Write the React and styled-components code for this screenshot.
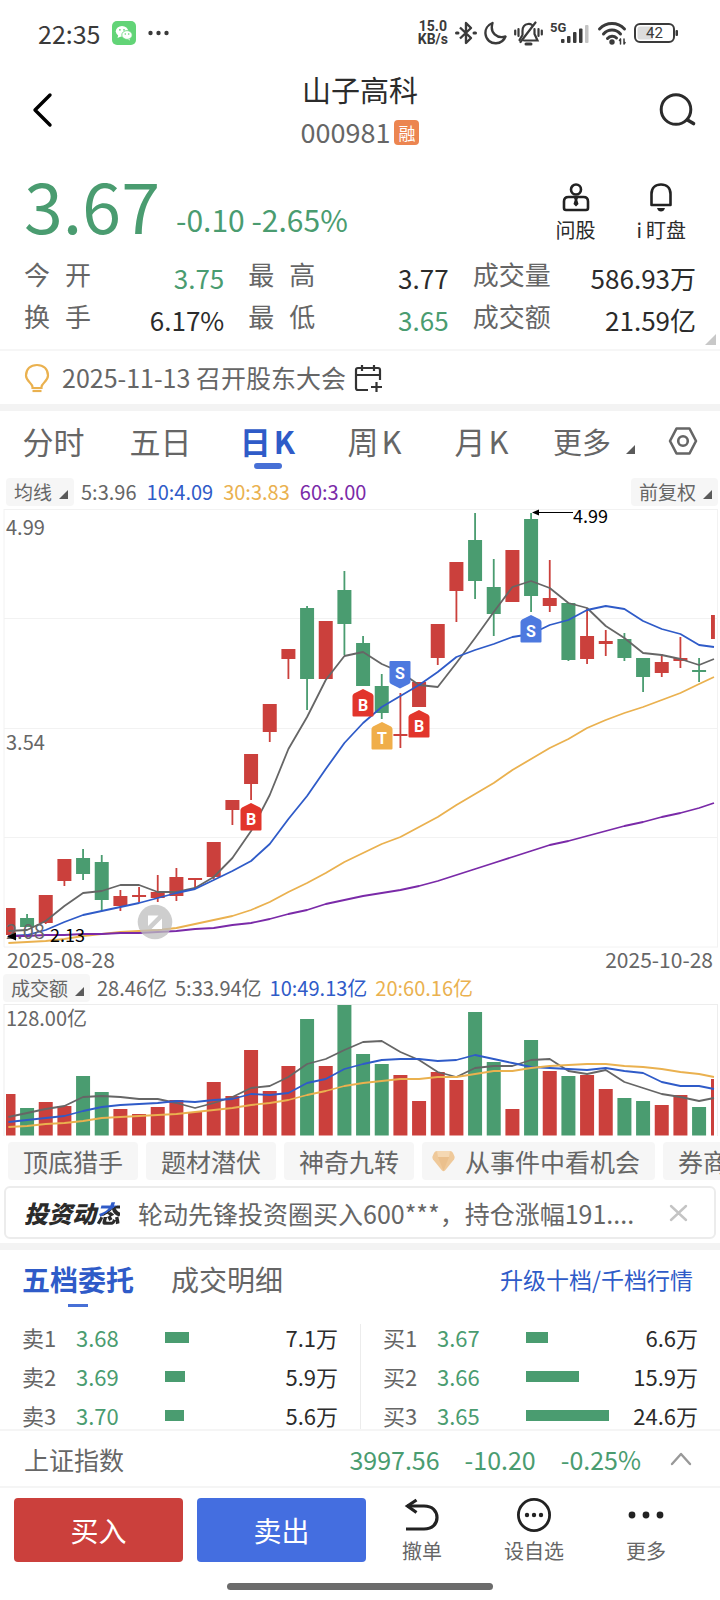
import React from "react";
import styled, { createGlobalStyle, css } from "styled-components";

const GREEN = "#4a9c70";
const RED = "#cb403c";
const BLUE = "#2f5bc8";
const GOLD = "#eab14f";
const PURPLE = "#7a2aa8";
const GRAY = "#666666";
const INK = "#2b2b2b";

const GlobalStyle = createGlobalStyle`
  * { box-sizing: border-box; }
  body {
    margin: 0;
    background: #fff;
    color: ${INK};
    font-family: "Noto Sans CJK SC", "Noto Sans", sans-serif;
  }
  button {
    border: 0;
    padding: 0;
    background: none;
    color: inherit;
    font: inherit;
  }
  h1, dl, dd, dt, p, ul { margin: 0; padding: 0; font-weight: 400; }
  svg { display: block; flex: none; }
`;

const Page = styled.div`
  width: 100%;
  overflow: hidden;
`;

/* ---------- status bar ---------- */
const StatusBar = styled.header`
  display: flex;
  align-items: center;
  justify-content: space-between;
  height: 66px;
  padding: 0 41px 0 38px;
  color: #3a3a3a;
`;
const StatusGroup = styled.div`
  display: flex;
  align-items: center;
  gap: ${(p) => p.$gap}px;
`;
const Clock = styled.time`
  font-size: 25px;
  line-height: 32px;
`;
const NetSpeed = styled.div`
  font: 700 14px/13px Roboto, sans-serif;
  text-align: center;
`;

/* ---------- title bar ---------- */
const TitleBar = styled.nav`
  display: grid;
  grid-template-columns: 1fr auto 1fr;
  align-items: center;
  height: 88px;
  padding: 0 23px;
`;
const NavButton = styled.button`
  justify-self: ${(p) => p.$side};
`;
const TitleBlock = styled.div`
  text-align: center;
`;
const StockName = styled.h1`
  font-size: 29px;
  line-height: 44px;
`;
const CodeLine = styled.div`
  display: flex;
  align-items: center;
  justify-content: center;
  gap: 4px;
  color: ${GRAY};
  font-size: 27px;
  line-height: 42px;
`;
const MarginTag = styled.span`
  width: 25px;
  border-radius: 4px;
  background: #ec8550;
  color: #fff;
  font-size: 17px;
  line-height: 25px;
  text-align: center;
`;

/* ---------- quote ---------- */
const QuoteHead = styled.section`
  display: flex;
  align-items: flex-end;
  justify-content: space-between;
  height: 94px;
  padding: 0 34px 0 24px;
`;
const PriceGroup = styled.div`
  display: flex;
  align-items: flex-end;
  gap: 16px;
  color: ${GREEN};
`;
const Price = styled.strong`
  font-size: 70px;
  font-weight: 400;
  line-height: 88px;
`;
const Change = styled.span`
  font-size: 30px;
  line-height: 58px;
`;
const QuickActions = styled.div`
  display: flex;
  gap: 41px;
`;
const QuickAction = styled.button`
  display: flex;
  flex-direction: column;
  align-items: center;
  gap: 4px;
  padding-bottom: 4px;
  font-size: 20px;
  line-height: 28px;
`;
const QuickLabel = styled.span`
  display: flex;
  gap: 4px;
`;
const Stats = styled.dl`
  display: grid;
  grid-template-columns: 200fr 200fr 223fr;
  column-gap: 24px;
  padding: 9px 24px 8px;
`;
const Stat = styled.div`
  display: flex;
  justify-content: space-between;
  height: 42px;
  font-size: 26px;
`;
const StatLabel = styled.dt`
  display: flex;
  gap: ${(p) => (p.$spread ? 15 : 0)}px;
  color: ${GRAY};
  line-height: 34px;
`;
const StatValue = styled.dd`
  color: ${(p) => (p.$down ? GREEN : INK)};
  line-height: 42px;
`;
const StatsWrap = styled.section`
  position: relative;
  border-bottom: 2px solid #f6f6f6;
`;
const Corner = styled.svg`
  position: absolute;
  right: 4px;
  bottom: 4px;
`;
const Notice = styled.a`
  display: flex;
  align-items: center;
  height: 53px;
  padding: 0 24px;
  color: ${GRAY};
  font-size: 25px;
  line-height: 34px;
  text-decoration: none;
`;
const NoticeText = styled.span`
  margin: 0 8px 2px 12px;
`;
const Band = styled.div`
  height: 7px;
  background: #f3f3f3;
`;

/* ---------- period tabs ---------- */
const Periods = styled.div`
  display: flex;
  height: 63px;
  padding-right: 22px;
`;
const PeriodTabs = styled.div`
  display: grid;
  flex: 535;
  grid-template-columns: repeat(5, 1fr);
`;
const PeriodTools = styled.div`
  display: flex;
  flex: 145;
  align-items: center;
  justify-content: space-between;
  padding: 0 0 4px 18px;
`;
const Period = styled.button`
  position: relative;
  display: flex;
  justify-content: center;
  gap: 3px;
  color: ${(p) => (p.$active ? BLUE : GRAY)};
  font-size: 31px;
  font-weight: ${(p) => (p.$active ? 700 : 400)};
  line-height: 60px;
  ${(p) =>
    p.$active &&
    css`
      &::after {
        content: "";
        position: absolute;
        bottom: 5px;
        left: 50%;
        width: 28px;
        height: 6px;
        margin-left: -14px;
        border-radius: 3px;
        background: #4770d6;
      }
    `}
`;
const MoreButton = styled.button`
  display: flex;
  align-items: flex-end;
  gap: 15px;
  color: ${GRAY};
  font-size: 29px;
  line-height: 58px;
`;
const PeriodCaret = styled.span`
  padding-bottom: 16px;
`;

/* ---------- indicator rows ---------- */
const IndicatorRow = styled.div`
  display: flex;
  align-items: center;
  height: ${(p) => p.$height}px;
  padding: 0 2px 0 ${(p) => p.$left}px;
  font-size: 20px;
  line-height: 28px;
`;
const Select = styled.button`
  display: flex;
  align-items: center;
  gap: 7px;
  height: 28px;
  padding: 0 6px 0 8px;
  border-radius: 4px;
  background: #f6f6f6;
  color: ${GRAY};
  font-size: 19px;
  line-height: 28px;
`;
const SelectCaret = styled.span`
  padding-top: 6px;
`;
const Averages = styled.div`
  display: flex;
  flex: 1;
  gap: ${(p) => p.$gap}px;
  padding-left: 7px;
`;
const Average = styled.span`
  color: ${(p) => p.$color};
`;
const ChartSvg = styled.svg`
  width: 100%;
  height: auto;
  overflow: visible;
`;
const Dates = styled.div`
  display: flex;
  justify-content: space-between;
  height: 23px;
  padding: 0 7px;
  color: ${GRAY};
  font-size: 21px;
  line-height: 20px;
`;

/* ---------- strategy chips ---------- */
const Chips = styled.div`
  display: flex;
  gap: 8px;
  padding: 6px 0 6px 8px;
  overflow: hidden;
`;
const Chip = styled.button`
  display: flex;
  flex: none;
  align-items: center;
  gap: 10px;
  height: 38px;
  padding: 0 15px 0 ${(p) => (p.$icon ? 10 : 15)}px;
  border-radius: 4px;
  background: #f6f6f6;
  color: ${GRAY};
  font-size: 25px;
  line-height: 38px;
`;

/* ---------- news ---------- */
const News = styled.div`
  display: flex;
  align-items: center;
  height: 53px;
  margin: 0 4px 4px;
  padding: 0 26px 0 18px;
  border: 2px solid #ececec;
  border-radius: 6px;
`;
const NewsBrand = styled.strong`
  flex: none;
  font-size: 24px;
  font-style: italic;
  font-weight: 900;
`;
const BrandAccent = styled.span`
  background: linear-gradient(145deg, ${BLUE} 48%, ${INK} 49%);
  background-clip: text;
  -webkit-background-clip: text;
  color: transparent;
`;
const NewsText = styled.p`
  flex: 1;
  min-width: 0;
  padding: 0 18px;
  overflow: hidden;
  color: ${GRAY};
  font-size: 25px;
  line-height: 40px;
  white-space: nowrap;
`;

/* ---------- order book ---------- */
const BookHead = styled.div`
  display: flex;
  align-items: center;
  gap: 37px;
  height: 74px;
  padding: 0 27px 16px 22px;
`;
const BookTab = styled.button`
  position: relative;
  color: ${(p) => (p.$active ? BLUE : GRAY)};
  font-size: 28px;
  font-weight: ${(p) => (p.$active ? 700 : 400)};
  line-height: 56px;
  ${(p) =>
    p.$active &&
    css`
      &::after {
        content: "";
        position: absolute;
        bottom: 0;
        left: 50%;
        width: 20px;
        height: 3px;
        margin-left: -10px;
        background: #4770d6;
      }
    `}
`;
const Upgrade = styled.a`
  margin-left: auto;
  color: ${BLUE};
  font-size: 23px;
  text-decoration: none;
`;
const Book = styled.div`
  display: grid;
  grid-template-columns: 1fr 1fr;
`;
const Side = styled.table`
  width: 100%;
  border-collapse: collapse;
  table-layout: fixed;
  font-size: 22px;
  line-height: 27px;
`;
const SideWrap = styled.div`
  padding: 0 22px;
  border-left: ${(p) => (p.$divided ? "1px solid #ececec" : "0")};
`;
const Cell = styled.td`
  width: ${(p) => p.$width};
  padding: 0 0 12px;
  color: ${(p) => p.$color};
  text-align: ${(p) => p.$align || "left"};
  white-space: nowrap;
  vertical-align: top;
  tr:last-child > & {
    padding-bottom: 0;
  }
`;
const DepthTrack = styled.div`
  display: flex;
  align-items: center;
  height: 27px;
`;
const DepthBar = styled.div`
  height: 11px;
  background: ${GREEN};
`;

/* ---------- index row and trade bar ---------- */
const IndexRow = styled.div`
  display: flex;
  align-items: center;
  height: 59px;
  padding: 0 28px 0 24px;
  border-top: 2px solid #f5f5f5;
  border-bottom: 2px solid #f5f5f5;
  background: #fff;
  color: ${GRAY};
  font-size: 25px;
`;
const IndexFigures = styled.div`
  display: flex;
  gap: 25px;
  margin-left: auto;
  padding-right: 29px;
  color: ${GREEN};
`;
const TradeBar = styled.footer`
  display: flex;
  gap: 14px;
  padding: 10px 18px 0 14px;
`;
const TradeButton = styled.button`
  flex: 169;
  height: 64px;
  border-radius: 4px;
  background: ${(p) => p.$color};
  color: #fff;
  font-size: 28px;
  line-height: 60px;
`;
const Tools = styled.div`
  display: grid;
  flex: 336;
  grid-template-columns: repeat(3, 1fr);
  margin-left: -14px;
`;
const Tool = styled.button`
  display: flex;
  flex-direction: column;
  align-items: center;
  gap: 5px;
  color: ${GRAY};
  font-size: 20px;
  line-height: 28px;
`;
const HomeArea = styled.div`
  display: flex;
  justify-content: center;
  padding: 18px 0 10px;
`;
const HomeIndicator = styled.div`
  width: 37%;
  height: 7px;
  border-radius: 4px;
  background: #6b6b6b;
`;

const Caret = ({ size = 9, color = "#5a5a5a" }) => (
  <svg width={size} height={size} viewBox="0 0 10 10" aria-hidden="true">
    <path d="M10 0V10H0Z" fill={color} />
  </svg>
);

/* ---------- chart data ---------- */
const barX = (i) => (i === 38 ? 714 : 8.4 + i * 18.667);

// [direction, high, body top, body bottom, low, volume top]
const CANDLES = [
  ["r", 399, 399, 426, 426, 90],
  ["g", 405, 409, 418, 418, 104],
  ["r", 386, 386, 414, 415, 98],
  ["r", 350, 350, 372, 377, 102],
  ["g", 340, 349, 365, 371, 72],
  ["g", 346, 353, 391, 402, 88],
  ["r", 381, 387, 397, 402, 105],
  ["r", 378, 386, 388, 393, 110],
  ["r", 366, 383, 389, 393, 103],
  ["r", 359, 368, 387, 392, 96],
  ["r", 369, 369, 371, 379, 108],
  ["r", 333, 333, 368, 370, 78],
  ["r", 291, 291, 301, 316, 92],
  ["r", 245, 245, 275, 291, 46],
  ["r", 195, 195, 223, 233, 87],
  ["r", 140, 140, 150, 170, 62],
  ["g", 97, 99, 170, 201, 15],
  ["r", 112, 112, 170, 170, 62],
  ["g", 62, 81, 115, 146, 1],
  ["g", 127, 134, 177, 177, 50],
  ["g", 165, 177, 204, 210, 60],
  ["r", 184, 225, 227, 239, 71],
  ["r", 173, 173, 198, 198, 97],
  ["r", 115, 115, 149, 156, 68],
  ["r", 53, 53, 82, 113, 76],
  ["g", 4, 31, 72, 90, 8],
  ["g", 50, 78, 105, 127, 58],
  ["r", 41, 41, 93, 93, 105],
  ["g", 4, 10, 87, 103, 36],
  ["r", 51, 89, 97, 103, 67],
  ["g", 94, 94, 151, 152, 72],
  ["r", 99, 127, 150, 155, 71],
  ["r", 121, 132, 135, 147, 85],
  ["g", 124, 130, 149, 152, 94],
  ["g", 149, 149, 168, 183, 97],
  ["r", 145, 153, 164, 168, 101],
  ["r", 128, 149, 152, 159, 91],
  ["g", 149, 161, 163, 173, 103],
  ["r", 106, 106, 130, 130, 75],
];

const MA5 = [422, 421, 412, 397, 384, 382, 376, 376, 383, 383, 379, 368, 349, 322, 286, 240, 208, 171, 147, 143, 155, 163, 176, 178, 154, 129, 103, 78, 72, 79, 94, 99, 117, 129, 144, 146, 150, 156, 150];
const MA10 = [427, 426, 421, 413, 406, 402, 398, 394, 389, 384, 380, 371, 362, 352, 335, 310, 287, 260, 234, 214, 198, 187, 176, 163, 148, 141, 135, 128, 125, 116, 111, 101, 97, 100, 112, 120, 125, 136, 138];
const MA30 = [434, 433, 432, 430, 427, 425, 423, 422, 421, 419, 415, 411, 407, 401, 393, 383, 374, 364, 353, 344, 335, 328, 318, 308, 296, 285, 274, 261, 250, 239, 230, 219, 211, 204, 198, 191, 184, 175, 168];
const MA60 = [427, 427, 426, 426, 425, 425, 424, 424, 423, 422, 420, 419, 416, 414, 410, 405, 401, 395, 391, 387, 384, 381, 377, 372, 366, 360, 354, 348, 342, 336, 332, 327, 322, 317, 313, 308, 304, 299, 294];
const VOL5 = [113, 109, 105, 102, 93, 92, 93, 95, 95, 99, 104, 99, 93, 84, 82, 73, 60, 55, 46, 38, 37, 48, 56, 68, 73, 64, 62, 62, 56, 55, 67, 70, 66, 78, 84, 90, 93, 97, 94];
const VOL10 = [118, 116, 114, 112, 107, 103, 101, 100, 99, 97, 98, 96, 95, 90, 91, 89, 79, 75, 65, 60, 56, 55, 55, 57, 56, 51, 55, 59, 63, 64, 65, 66, 64, 67, 69, 78, 82, 82, 85];
const VOL20 = [123, 122, 120, 119, 117, 114, 113, 112, 111, 110, 108, 106, 104, 101, 99, 96, 91, 87, 82, 79, 77, 75, 75, 73, 73, 70, 67, 67, 64, 62, 61, 60, 60, 62, 63, 65, 68, 70, 73];

const toPoints = (values) => values.map((y, i) => `${barX(i)},${y}`).join(" ");

const Line = ({ values, color }) => (
  <polyline points={toPoints(values)} fill="none" stroke={color} strokeWidth="1.8" strokeLinejoin="round" />
);

const bodyLeft = (i) => (i === 0 ? 6 : i === 38 ? 711 : barX(i) - 7);
const bodyWidth = (i) => (i === 0 ? 9.5 : i === 38 ? 3 : 14);
const tone = (dir) => (dir === "g" ? GREEN : RED);

const MARKS = [
  { letter: "B", x: 251, y: 294, color: "#e2352b" },
  { letter: "B", x: 363, y: 180, color: "#e2352b" },
  { letter: "T", x: 382, y: 213, color: "#f0ae4a" },
  { letter: "S", x: 400, y: 152, color: "#4d79df", down: true },
  { letter: "B", x: 419, y: 201, color: "#e2352b" },
  { letter: "S", x: 531, y: 106, color: "#4d79df" },
];

const Mark = ({ letter, x, y, color, down }) => (
  <g transform={`translate(${x} ${y})`}>
    <path
      d={
        down
          ? "M-9.500 0H9.500Q10.500 0 10.500 1V20.500Q10.500 22 9 23L0 27.500L-9 23Q-10.500 22 -10.500 20.500V1Q-10.500 0 -9.500 0Z"
          : "M0 0L9 4.500Q10.500 5.500 10.500 7V26.500Q10.500 27.500 9.500 27.500H-9.500Q-10.500 27.500 -10.500 26.500V7Q-10.500 5.500 -9 4.500Z"
      }
      fill={color}
    />
    <text x="0" y={down ? 18 : 22} textAnchor="middle" fontSize="16" fontWeight="700" fill="#fff" fontFamily="Roboto, sans-serif">
      {letter}
    </text>
  </g>
);

const PriceChart = () => (
  <ChartSvg viewBox="0 0 720 440" role="img" aria-label="日K线图">
    <path d="M4 .5H718M4 109.500H718M4 219.500H718M4 328.500H718M4 438H718M4 0V438M717.500 0V438" stroke="#f2f2f2" fill="none" />
    {CANDLES.map(([dir, high, top, bottom, low], i) => (
      <g key={i} fill={tone(dir)}>
        <rect x={barX(i) - 0.9} y={high} width="1.8" height={low - high} />
        <rect x={bodyLeft(i)} y={top} width={bodyWidth(i)} height={bottom - top} />
      </g>
    ))}
    <Line values={MA5} color="#666" />
    <Line values={MA10} color={BLUE} />
    <Line values={MA30} color={GOLD} />
    <Line values={MA60} color={PURPLE} />
    {MARKS.map((m) => (
      <Mark key={`${m.letter}${m.x}`} {...m} />
    ))}
    <g fill={GRAY} fontSize="20">
      <text x="6" y="26">4.99</text>
      <text x="6" y="241">3.54</text>
      <text x="6" y="430">2.08</text>
    </g>
    <path d="M538 3.500H573" stroke="#000" />
    <path d="M532 3.500L539 .5V6.500Z" />
    <text x="573" y="14" fontSize="18">4.99</text>
    <path d="M7 427.500L16 423.500V431.500Z" />
    <text x="50" y="433" fontSize="18">2.13</text>
    <circle cx="155" cy="413" r="17.300" fill="#bdbdbd" fillOpacity=".75" />
    <path d="M148 406.500H158.500L148 417ZM162 409.500V420H151.500Z" fill="#fff" />
  </ChartSvg>
);

const VolumeChart = () => (
  <ChartSvg viewBox="0 0 720 132" role="img" aria-label="成交额">
    <path d="M4 .5H718M4 0V132M717.500 0V132" stroke="#ededed" fill="none" />
    {CANDLES.map(([dir, , , , , top], i) => (
      <rect key={i} x={bodyLeft(i)} y={top} width={bodyWidth(i)} height={131.5 - top} fill={tone(dir)} />
    ))}
    <Line values={VOL5} color="#666" />
    <Line values={VOL10} color={BLUE} />
    <Line values={VOL20} color={GOLD} />
    <text x="6" y="22" fontSize="20" fill={GRAY}>128.00亿</text>
  </ChartSvg>
);

/* ---------- icons ---------- */
const WeChat = () => (
  <svg width="24" height="24" viewBox="0 0 24 24">
    <rect width="24" height="24" rx="5" fill="#62d477" />
    <ellipse cx="10" cy="10.200" rx="6.200" ry="5.200" fill="#fff" />
    <path d="M5.500 17L6.500 13L10 15ZM17.500 19.500L18.500 15.500L14.500 17.500Z" fill="#fff" />
    <ellipse cx="15" cy="14" rx="5.200" ry="4.400" fill="#fff" stroke="#62d477" strokeWidth=".8" />
    <g fill="#62d477">
      <circle cx="7.900" cy="8.800" r=".9" /><circle cx="12" cy="8.800" r=".9" />
      <circle cx="13.300" cy="13" r=".8" /><circle cx="16.700" cy="13" r=".8" />
    </g>
  </svg>
);
const Dots = () => (
  <svg width="22" height="8" viewBox="0 0 22 8" fill="#3a3a3a">
    <circle cx="2.500" cy="4" r="2.200" /><circle cx="10.500" cy="4" r="2.200" /><circle cx="18.500" cy="4" r="2.200" />
  </svg>
);
const Bluetooth = () => (
  <svg width="22" height="24" viewBox="0 0 22 24" fill="none" stroke="#3a3a3a" strokeWidth="2.400">
    <path d="M5 6.500L16 17L11 22V2L16 7L5 17.500" strokeLinejoin="round" />
    <path d="M1.500 12H3M19 12H20.500" strokeWidth="3" strokeLinecap="round" />
  </svg>
);
const Moon = () => (
  <svg width="23" height="24" viewBox="0 0 23 24" fill="none" stroke="#3a3a3a" strokeWidth="2.400" strokeLinejoin="round">
    <path d="M8.500 2C3.500 4 1 8.500 1.500 13C2 19 7 22.500 12 22.300C16.500 22 20 19.500 21.500 15.500C13 18 5.500 12 8.500 2Z" />
  </svg>
);
const MutedBell = () => (
  <svg width="29" height="25" viewBox="0 0 29 25" fill="none" stroke="#3a3a3a" strokeWidth="2.200" strokeLinecap="round">
    <path d="M8.500 14V10C8.500 6 10.500 3.500 14 3C15.500 2.800 17 3.200 18 4M20.500 8V13L23.500 19.500H10M5.500 19L8.500 14" />
    <path d="M21.500 1.500L6.500 21" />
    <path d="M12 23H17" strokeWidth="3" />
    <path d="M4.500 8V15M1.200 9.500V13.500M24.500 8V15M27.800 9.500V13.500" />
  </svg>
);
const Signal = () => (
  <svg width="40" height="24" viewBox="0 0 40 24">
    <text x="0" y="11" fontSize="13" fontWeight="700" fontFamily="Roboto, sans-serif" fill="#3a3a3a">5G</text>
    <g fill="#3a3a3a">
      <rect x="11" y="18" width="3.500" height="4" rx="1" />
      <rect x="17" y="15" width="3.500" height="7" rx="1" />
      <rect x="23" y="11" width="3.500" height="11" rx="1" />
      <rect x="29" y="7.500" width="3.500" height="14.500" rx="1" />
      <rect x="35" y="4" width="3.500" height="18" rx="1" fill="#c4c4c4" />
    </g>
  </svg>
);
const Wifi = () => (
  <svg width="30" height="24" viewBox="0 0 30 24" fill="none" stroke="#3a3a3a" strokeWidth="3" strokeLinecap="round">
    <path d="M2.500 8C9.500 .8 20.500 .8 27.500 8" />
    <path d="M6.500 13C11 7.700 19 7.700 23.500 13" />
    <path d="M10.500 17.500C13 14.500 17 14.500 19.500 17" />
    <circle cx="15" cy="21" r="1.200" fill="#3a3a3a" />
    <path d="M23.500 18V23M27 23V18M23.500 18L22.500 19.500M27 23L28 21.500" strokeWidth="1.500" />
  </svg>
);
const Battery = () => (
  <svg width="45" height="20" viewBox="0 0 45 20">
    <rect x="1" y="1" width="39" height="18" rx="5" fill="none" stroke="#3a3a3a" strokeWidth="2" />
    <path d="M6 3.500H19V16.500H6Q3.500 16.500 3.500 14V6Q3.500 3.500 6 3.500Z" fill="#dcdcdc" />
    <rect x="41.500" y="7" width="2.500" height="6" rx="1" fill="#3a3a3a" />
    <text x="20.500" y="15" textAnchor="middle" fontSize="15" fontFamily="Roboto, sans-serif" fill="#3a3a3a">42</text>
  </svg>
);
const Back = () => (
  <svg width="32" height="36" viewBox="0 0 32 36" fill="none" stroke="#000" strokeWidth="3.400" strokeLinecap="round" strokeLinejoin="round">
    <path d="M27 3L12 18L27 33" />
  </svg>
);
const Search = () => (
  <svg width="38" height="34" viewBox="0 0 38 34" fill="none" stroke="#2b2b2b" strokeWidth="3" strokeLinecap="round">
    <circle cx="17" cy="16.500" r="14.800" />
    <path d="M28.500 27L34.500 30.500" strokeWidth="3.600" />
  </svg>
);
const Adviser = () => (
  <svg width="28" height="29" viewBox="0 0 28 29" fill="none" stroke="#222" strokeWidth="2.600">
    <circle cx="14" cy="6.500" r="5" />
    <path d="M6.500 14H21.500Q26 14 26 18.500V25Q26 27 24 27H4Q2 27 2 25V18.500Q2 14 6.500 14Z" />
    <path d="M12 15H16L15.300 17L16.500 21L14 23.500L11.500 21L12.700 17Z" fill="#222" stroke="none" />
  </svg>
);
const Bell = () => (
  <svg width="24" height="29" viewBox="0 0 24 29" fill="none" stroke="#222" strokeWidth="2.600" strokeLinejoin="round">
    <path d="M2.500 22V11C2.500 5 6.500 1.500 12 1.500S21.500 5 21.500 11V22Z" />
    <path d="M8 25H16Q15 28.500 12 28.500T8 25Z" fill="#222" stroke="none" />
  </svg>
);
const Bulb = () => (
  <svg width="26" height="30" viewBox="0 0 26 30" fill="none" stroke={GOLD} strokeWidth="2.200">
    <path d="M8.500 24C8.500 20 2 18.500 2 12.500C2 6 6.500 2 13 2S24 6 24 12.500C24 18.500 17.500 20 17.500 24V25H8.500Z" />
    <path d="M8.500 28H17.500" />
  </svg>
);
const Calendar = () => (
  <svg width="28" height="28" viewBox="0 0 28 28" fill="none" stroke="#333" strokeWidth="2.200">
    <path d="M14 26H4Q2 26 2 24V6Q2 4 4 4H24Q26 4 26 6V16M2 11H26M8 1V7M20 1V7M22.500 18V28M17 23H28" />
  </svg>
);
const Settings = () => (
  <svg width="30" height="28" viewBox="0 0 30 28" fill="none" stroke={GRAY} strokeWidth="2.600" strokeLinejoin="round">
    <path d="M8.500 1.500H21.500L28 14L21.500 26.500H8.500L2 14Z" />
    <circle cx="15" cy="14" r="4.800" />
  </svg>
);
const Diamond = () => (
  <svg width="23" height="22" viewBox="0 0 23 22">
    <path d="M5 1H18Q20 1 21 3L22.500 6.500Q23 8 22 9.500L13 20.500Q11.500 22 10 20.500L1 9.500Q0 8 .5 6.500L2 3Q3 1 5 1Z" fill="#efc99a" />
    <path d="M6 7H17L11.500 21Z" fill="#ebc08d" />
    <path d="M5 1H18L17 7H6Z" fill="#f5d8b3" />
  </svg>
);
const Close = () => (
  <svg width="19" height="18" viewBox="0 0 19 18" stroke="#c4c4c4" strokeWidth="2.400" strokeLinecap="round">
    <path d="M2 2L17 16M17 2L2 16" />
  </svg>
);
const ChevronUp = () => (
  <svg width="22" height="14" viewBox="0 0 22 14" fill="none" stroke="#999" strokeWidth="2.400" strokeLinecap="round" strokeLinejoin="round">
    <path d="M2 12L11 2L20 12" />
  </svg>
);
const Undo = () => (
  <svg width="36" height="34" viewBox="0 0 36 34" fill="none" stroke="#222" strokeWidth="3.200">
    <path d="M3 8H20C28.500 8 33 13 33 19.500S28.500 31 20 31H2" />
    <path d="M12.500 2L3.500 8L12.500 14.500" />
  </svg>
);
const Watch = () => (
  <svg width="36" height="34" viewBox="0 0 36 34" fill="none" stroke="#222" strokeWidth="2.800">
    <circle cx="18" cy="17" r="15.600" />
    <g fill="#222" stroke="none">
      <circle cx="11" cy="17" r="2.200" /><circle cx="18" cy="17" r="2.200" /><circle cx="25" cy="17" r="2.200" />
    </g>
  </svg>
);
const More = () => (
  <svg width="38" height="34" viewBox="0 0 38 34" fill="#222">
    <circle cx="5" cy="17" r="3.400" /><circle cx="19" cy="17" r="3.400" /><circle cx="33" cy="17" r="3.400" />
  </svg>
);

/* ---------- content ---------- */
const STATS = [
  ["今开", "3.75", true],
  ["最高", "3.77", false],
  ["成交量", "586.93万", false],
  ["换手", "6.17%", false],
  ["最低", "3.65", true],
  ["成交额", "21.59亿", false],
];
const PERIODS = ["分时", "五日", "日K", "周K", "月K"];
const SELLS = [["卖1", "3.68", 7.1], ["卖2", "3.69", 5.9], ["卖3", "3.70", 5.6]];
const BUYS = [["买1", "3.67", 6.6], ["买2", "3.66", 15.9], ["买3", "3.65", 24.6]];
const LARGEST = 24.6;

const BookSide = ({ levels, divided }) => (
  <SideWrap $divided={divided}>
    <Side>
      <tbody>
        {levels.map(([label, price, amount]) => (
          <tr key={label}>
            <Cell $width="54px" $color={GRAY}>{label}</Cell>
            <Cell $width="89px" $color={GREEN}>{price}</Cell>
            <Cell $width="auto">
              <DepthTrack>
                <DepthBar style={{ width: `${(amount / LARGEST) * 78}%` }} />
              </DepthTrack>
            </Cell>
            <Cell $width="66px" $color={INK} $align="right">{amount}万</Cell>
          </tr>
        ))}
      </tbody>
    </Side>
  </SideWrap>
);

const Dropdown = ({ children }) => (
  <Select>
    {children}
    <SelectCaret><Caret /></SelectCaret>
  </Select>
);

export default function App() {
  return (
    <Page>
      <GlobalStyle />
      <StatusBar>
        <StatusGroup $gap={12}>
          <Clock>22:35</Clock>
          <WeChat />
          <Dots />
        </StatusGroup>
        <StatusGroup $gap={7}>
          <NetSpeed>15.0<br />KB/s</NetSpeed>
          <Bluetooth />
          <Moon />
          <MutedBell />
          <Signal />
          <Wifi />
          <Battery />
        </StatusGroup>
      </StatusBar>

      <TitleBar>
        <NavButton $side="start" aria-label="返回"><Back /></NavButton>
        <TitleBlock>
          <StockName>山子高科</StockName>
          <CodeLine>000981<MarginTag>融</MarginTag></CodeLine>
        </TitleBlock>
        <NavButton $side="end" aria-label="搜索"><Search /></NavButton>
      </TitleBar>

      <QuoteHead>
        <PriceGroup>
          <Price>3.67</Price>
          <Change>-0.10 -2.65%</Change>
        </PriceGroup>
        <QuickActions>
          <QuickAction><Adviser />问股</QuickAction>
          <QuickAction><Bell /><QuickLabel><span>i</span><span>盯盘</span></QuickLabel></QuickAction>
        </QuickActions>
      </QuoteHead>

      <StatsWrap>
        <Stats>
          {STATS.map(([label, value, down]) => (
            <Stat key={label}>
              <StatLabel $spread={label.length === 2}>
                {label.length === 2 ? [...label].map((c) => <span key={c}>{c}</span>) : label}
              </StatLabel>
              <StatValue $down={down}>{value}</StatValue>
            </Stat>
          ))}
        </Stats>
        <Corner width="11" height="11" viewBox="0 0 10 10"><path d="M10 0V10H0Z" fill="#c8c8c8" /></Corner>
      </StatsWrap>

      <Notice href="#meeting">
        <Bulb />
        <NoticeText>2025-11-13 召开股东大会</NoticeText>
        <Calendar />
      </Notice>
      <Band />

      <Periods>
        <PeriodTabs>
          {PERIODS.map((p) => (
            <Period key={p} $active={p === "日K"}>
              {p.endsWith("K") ? <><span>{p[0]}</span><span>K</span></> : p}
            </Period>
          ))}
        </PeriodTabs>
        <PeriodTools>
          <MoreButton>更多<PeriodCaret><Caret /></PeriodCaret></MoreButton>
          <button aria-label="设置"><Settings /></button>
        </PeriodTools>
      </Periods>

      <IndicatorRow $height={35} $left={6}>
        <Dropdown>均线</Dropdown>
        <Averages $gap={10}>
          <Average $color={GRAY}>5:3.96</Average>
          <Average $color={BLUE}>10:4.09</Average>
          <Average $color={GOLD}>30:3.83</Average>
          <Average $color={PURPLE}>60:3.00</Average>
        </Averages>
        <Dropdown>前复权</Dropdown>
      </IndicatorRow>
      <PriceChart />
      <Dates><span>2025-08-28</span><span>2025-10-28</span></Dates>

      <IndicatorRow $height={32} $left={3}>
        <Dropdown>成交额</Dropdown>
        <Averages $gap={8}>
          <Average $color={GRAY}>28.46亿</Average>
          <Average $color={GRAY}>5:33.94亿</Average>
          <Average $color={BLUE}>10:49.13亿</Average>
          <Average $color={GOLD}>20:60.16亿</Average>
        </Averages>
      </IndicatorRow>
      <VolumeChart />

      <Chips>
        <Chip>顶底猎手</Chip>
        <Chip>题材潜伏</Chip>
        <Chip>神奇九转</Chip>
        <Chip $icon><Diamond />从事件中看机会</Chip>
        <Chip>券商</Chip>
      </Chips>

      <News>
        <NewsBrand>投资动<BrandAccent>态</BrandAccent></NewsBrand>
        <NewsText>轮动先锋投资圈买入600***，持仓涨幅191....</NewsText>
        <button aria-label="关闭"><Close /></button>
      </News>
      <Band />

      <BookHead>
        <BookTab $active>五档委托</BookTab>
        <BookTab>成交明细</BookTab>
        <Upgrade href="#upgrade">升级十档/千档行情</Upgrade>
      </BookHead>
      <Book>
        <BookSide levels={SELLS} />
        <BookSide levels={BUYS} divided />
      </Book>

      <IndexRow>
        <span>上证指数</span>
        <IndexFigures><span>3997.56</span><span>-10.20</span><span>-0.25%</span></IndexFigures>
        <button aria-label="展开"><ChevronUp /></button>
      </IndexRow>

      <TradeBar>
        <TradeButton $color={RED}>买入</TradeButton>
        <TradeButton $color="#446ee0">卖出</TradeButton>
        <Tools>
          <Tool><Undo />撤单</Tool>
          <Tool><Watch />设自选</Tool>
          <Tool><More />更多</Tool>
        </Tools>
      </TradeBar>
      <HomeArea><HomeIndicator /></HomeArea>
    </Page>
  );
}
